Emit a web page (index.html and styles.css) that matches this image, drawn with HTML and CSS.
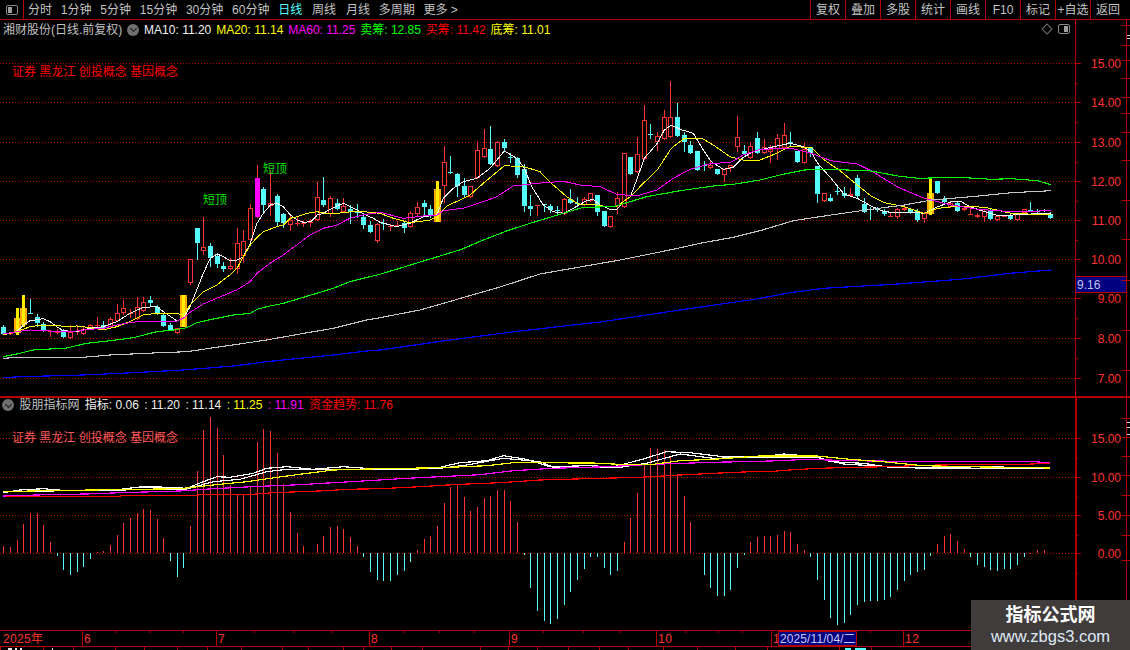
FILE: index.html
```html
<!DOCTYPE html>
<html lang="zh-CN">
<head>
<meta charset="utf-8">
<title>湘财股份 日线</title>
<link rel="stylesheet" href="styles.css">
</head>
<body>
<div class="app">
  <header class="toolbar">
    <button class="sidebar-toggle" aria-label="侧栏"><span class="toggle-icon toggle-left"></span></button>
    <nav class="periods">
      <span>分时</span><span>1分钟</span><span>5分钟</span><span>15分钟</span><span>30分钟</span><span>60分钟</span>
      <span class="active">日线</span><span class="wide">周线</span><span class="wide">月线</span><span>多周期</span><span>更多 &gt;</span>
    </nav>
    <div class="actions">
      <span>复权</span><span>叠加</span><span>多股</span><span>统计</span><span>画线</span><span>F10</span><span>标记</span><span>+自选</span><span>返回</span>
    </div>
  </header>

  <section class="panel price-panel">
    <svg id="price" class="chart" viewBox="0 20 1130 376" width="1130" height="376"></svg>
    <div class="legend price-legend">
      <span class="title">湘财股份(日线.前复权)</span>
      <span class="chevron"></span>
      <span class="white">MA10: 11.20</span>
      <span class="yellow">MA20: 11.14</span>
      <span class="magenta">MA60: 11.25</span>
      <span class="green">卖筹: 12.85</span>
      <span class="red">买筹: 11.42</span>
      <span class="yellow">底筹: 11.01</span>
    </div>
    <div class="tools">
      <span class="diamond"></span>
      <span class="toggle-icon toggle-right"></span>
    </div>
    <p class="concepts price-concepts">证券 黑龙江 创投概念 基因概念</p>
  </section>

  <section class="panel indicator-panel">
    <svg id="indicator" class="chart" viewBox="0 398 1130 232" width="1130" height="232"></svg>
    <div class="legend indicator-legend">
      <span class="chevron"></span>
      <span class="title">股朋指标网</span>
      <span class="white name">指标: 0.06</span>
      <span class="white">: 11.20</span>
      <span class="white">: 11.14</span>
      <span class="yellow">: 11.25</span>
      <span class="magenta">: 11.91</span>
      <span class="red">资金趋势: 11.76</span>
    </div>
    <p class="concepts indicator-concepts">证券 黑龙江 创投概念 基因概念</p>
  </section>

  <footer class="timeline">
    <svg id="time" class="chart" viewBox="0 630 1130 20" width="1130" height="20"></svg>
  </footer>

  <aside class="watermark">
    <strong>指标公式网</strong>
    <span>www.zbgs3.com</span>
  </aside>
</div>
<script src="chart.js"></script>
</body>
</html>
```

FILE: styles.css
```css
* { box-sizing: border-box; }
html, body { margin: 0; padding: 0; background: #000; overflow: hidden; }
body { width: 1130px; height: 650px; font: 12px/1 "Liberation Sans", "Noto Sans CJK SC", sans-serif; color: #c8c8c8; }
.app { position: relative; width: 1130px; height: 650px; display: flex; flex-direction: column; overflow: hidden; }

.toolbar { flex: 0 0 20px; display: flex; align-items: stretch; border-bottom: 1px solid #b40000; }
.sidebar-toggle { width: 24px; padding: 0; background: none; border: 0; border-right: 1px solid #b40000; display: flex; align-items: center; justify-content: center; }
.toggle-icon { display: block; width: 12px; height: 10px; border: 1px solid #8a8a8a; border-radius: 2px; position: relative; }
.toggle-icon::after { content: ""; position: absolute; top: 1px; bottom: 1px; width: 4px; background: #a0a0a0; }
.toggle-left::after { left: 1px; }
.toggle-right::after { right: 1px; }
.periods { display: flex; align-items: center; gap: 8.8px; padding-left: 4px; flex: 1; color: #c4c4c4; }
.periods .wide { margin-left: 1px; }
.periods .active { color: #55ffff; }
.actions { display: flex; padding-right: 5px; color: #c4c4c4; }
.actions span { width: 35px; border-left: 1px solid #b40000; display: flex; align-items: center; justify-content: center; }

.panel { position: relative; }
.price-panel { flex: 0 0 376px; }
.indicator-panel { flex: 0 0 234px; border-top: 2px solid #b40000; }
.chart { display: block; }

.legend { position: absolute; display: flex; align-items: center; white-space: nowrap; }
.price-legend { top: 3px; left: 3px; height: 13px; gap: 4.9px; }
.indicator-legend { top: 0; left: 2px; height: 14px; gap: 5.4px; }
.legend .title { color: #c0c0c0; }
.chevron { width: 12px; height: 12px; border-radius: 50%; background: #707070; position: relative; flex: none; }
.chevron::after { content: ""; position: absolute; left: 3.5px; top: 2.5px; width: 4px; height: 4px; border: solid #1c1c1c; border-width: 0 1.5px 1.5px 0; transform: rotate(45deg); }
.white { color: #f0f0f0; }
.yellow { color: #ffff00; }
.magenta { color: #ff00ff; }
.green { color: #00ff00; }
.red { color: #ff0000; }

.tools { position: absolute; top: 4px; left: 1043px; display: flex; align-items: center; gap: 7px; }
.diamond { display: block; width: 8px; height: 8px; border: 1px solid #707070; transform: rotate(45deg); }

.concepts { position: absolute; margin: 0; left: 12px; white-space: nowrap; }
.price-concepts { top: 46px; color: #ff0000; }
.indicator-concepts { top: 34px; color: #ff5a5a; }

.timeline { flex: 0 0 20px; }

.watermark { position: absolute; right: 0; bottom: 0; width: 159px; height: 50px; background: #403c3c; display: flex; flex-direction: column; align-items: center; justify-content: center; gap: 3px; color: #fff; }
.watermark strong { font-size: 18px; line-height: 20px; }
.watermark span { font-size: 16.5px; line-height: 17px; color: #dfe9f5; }
```

FILE: chart.js
```js
// Daily price chart data, traced in 3x coordinates per section, then drawn as SVG.
var NS = "http://www.w3.org/2000/svg";
var RED = "#ff3232", CYAN = "#54fcfc", LINE = "#b40000";

function el(svg, name, attrs, text) {
  var n = document.createElementNS(NS, name);
  for (var k in attrs) n.setAttribute(k, attrs[k]);
  if (text !== undefined) n.textContent = text;
  svg.appendChild(n);
  return n;
}
function hline(s, x1, x2, y, c, extra) {
  var a = { x1: x1, x2: x2, y1: y + .5, y2: y + .5, stroke: c, "shape-rendering": "crispEdges" };
  for (var k in extra) a[k] = extra[k];
  el(s, "line", a);
}
function vline(s, x, y1, y2, c, w) {
  el(s, "rect", { x: x, y: y1, width: w || 1, height: Math.max(y2 - y1, 1), fill: c, "shape-rendering": "crispEdges" });
}
function cx(i) { return Math.round(3.3 + 6.67 * i); }

// [bodyTop, bodyBottom, high, low, kind]  kind: c cyan, r red, o signal, m magenta
var A = [
[531,551,525,552,"c"],[548,552,548,552,"r"],[505,550,475,555,"o"],[475,525,435,530,"o"],[488,488,447,492,"c"],
[502,520,492,530,"c"],[523,540,515,545,"c"],[543,543,540,560,"r"],[543,548,538,552,"r"],[541,560,537,561,"c"],
[546,563,525,563,"r"],[543,543,525,555,"r"],[536,553,530,555,"r"],[526,537,522,540,"r"],[526,526,502,532,"r"],
[526,535,513,540,"c"],[508,530,502,532,"r"],[488,513,462,515,"r"],[475,488,450,495,"r"],[490,490,478,505,"r"],
[470,507,442,510,"r"],[455,482,442,485,"r"],[450,458,438,470,"c"],[470,491,465,495,"c"],[496,527,490,530,"c"],
[526,540,518,542,"c"],[533,550,533,550,"r"],[435,530,435,530,"o"],[328,400,328,405,"r"],[235,278,235,330,"c"],
[290,304,202,315,"r"],[289,323,280,350,"c"],[318,341,310,353,"c"],[348,357,335,365,"c"],[349,358,325,360,"r"],
[280,358,235,372,"r"],[272,318,240,340,"r"],[175,270,163,280,"r"],[84,200,45,200,"m"],[118,164,112,190,"c"],
[160,167,60,197,"r"],[138,215,132,232,"c"],[192,218,188,235,"c"],[210,224,195,243,"r"],[218,218,200,228,"r"],
[218,218,212,231,"r"],[216,216,208,231,"r"],[142,210,95,212,"r"],[150,165,82,170,"c"],[145,192,138,200,"r"],
[160,176,148,180,"c"],[168,185,145,190,"r"],[178,185,165,222,"c"],[183,190,162,205,"c"],[200,224,190,237,"c"],
[225,246,213,250,"c"],[222,272,218,278,"r"]];
var B = [
[430,430,418,450,"c"],[438,438,432,452,"r"],[435,435,422,440,"r"],[430,443,425,458,"c"],[400,440,392,442,"r"],
[381,402,365,410,"r"],[370,381,360,408,"c"],[387,408,375,415,"c"],[327,425,303,425,"o"],[247,317,198,370,"r"],
[275,275,228,282,"c"],[282,318,280,350,"c"],[318,345,295,352,"c"],[319,352,319,352,"r"],[211,293,183,295,"r"],
[203,230,148,232,"r"],[207,251,138,253,"c"],[187,257,183,262,"r"],[187,203,178,215,"c"],[231,231,218,250,"c"],
[235,284,230,295,"c"],[267,377,252,395,"c"],[378,386,345,407,"c"],[374,374,374,407,"r"],[373,373,372,395,"c"],
[379,391,372,399,"c"],[390,390,378,402,"c"],[358,402,355,404,"r"],[358,369,327,372,"c"],[370,370,350,380,"c"],
[358,375,352,378,"r"],[340,362,338,365,"r"],[345,396,345,408,"c"],[393,438,393,440,"c"],[409,440,409,440,"r"],
[355,378,335,403,"r"],[220,380,220,380,"r"],[232,282,232,284,"c"],[223,276,170,278,"r"],[121,238,75,240,"r"],
[162,162,133,178,"c"],[169,185,155,212,"r"],[112,176,90,178,"r"],[112,170,3,172,"r"],[112,167,68,170,"c"],
[166,185,155,215,"c"],[195,219,183,222,"c"],[213,270,213,272,"c"],[255,255,243,272,"c"],[255,263,240,265,"r"],
[267,281,267,283,"c"],[267,284,267,305,"r"],[254,265,254,275,"r"],[172,202,108,215,"r"],[212,222,195,225,"c"],
[197,235,185,238,"r"],[175,218,157,220,"c"]];
var C = [
[140,160,118,162,"r"],[148,155,135,188,"r"],[115,148,102,180,"r"],[105,145,70,147,"r"],[126,126,97,140,"c"],
[153,187,153,189,"c"],[148,190,128,190,"r"],[142,160,142,170,"c"],[198,282,198,310,"c"],[278,302,278,302,"r"],
[293,302,282,302,"c"],[272,272,260,285,"c"],[280,287,262,293,"c"],[282,288,265,292,"r"],[234,287,226,293,"c"],
[312,335,294,336,"c"],[326,326,320,360,"c"],[326,331,320,335,"c"],[333,343,328,348,"c"],[348,348,336,352,"r"],
[328,350,325,357,"r"],[323,330,318,332,"r"],[327,339,324,340,"c"],[332,360,328,365,"c"],[339,358,336,368,"r"],
[279,343,235,345,"o"],[244,279,244,281,"c"],[296,305,288,305,"c"],[308,320,308,320,"r"],[308,332,304,332,"c"],
[325,331,318,331,"r"],[342,342,322,344,"r"],[345,352,338,353,"r"],[332,352,328,365,"r"],[332,356,328,356,"c"],
[348,359,347,359,"r"],[347,347,345,349,"r"],[345,356,342,358,"c"],[342,361,342,361,"r"],[326,340,326,340,"r"],
[329,329,306,332,"c"],[334,334,328,341,"c"],[331,331,328,335,"c"],[343,353,335,353,"c"]];

function toCandles() {
  var out = [];
  [[A, 150], [B, 80], [C, 100]].forEach(function (g) {
    g[0].forEach(function (d) {
      out.push({ t: g[1] + d[0] / 3, b: g[1] + d[1] / 3, h: g[1] + d[2] / 3, l: g[1] + d[3] / 3, k: d[4] });
    });
  });
  return out;
}

// chain polylines traced in several sections: [[xOffset, yOffset, [zx,zy,...]], ...]
function chain(parts) {
  var pts = [], last = -1;
  parts.forEach(function (p) {
    for (var i = 0; i < p[2].length; i += 2) {
      var x = p[0] + p[2][i] / 3, y = p[1] + p[2][i + 1] / 3;
      if (x > last) { pts.push(x.toFixed(1) + "," + y.toFixed(1)); last = x; }
    }
  });
  return pts.join(" ");
}
function poly(s, parts, color, w) {
  el(s, "polyline", { points: chain(parts), fill: "none", stroke: color, "stroke-width": w || 1, "shape-rendering": "crispEdges" });
}

var PL = [
["#f4f4f4", 1,
[10,552,50,545,70,525,90,512,130,506,150,515,170,530,190,542,230,545,270,535,310,530,350,515,390,490,430,472,470,470,490,485,530,512,550,505,570,470,590,420,610,370,631,325,652,312,670,320,690,332,711,330,730,320,751,280,771,220,790,190,811,165,832,160,850,170,871,195,892,210,910,217,932,215,952,195,970,190,990,178,1030,160,1051,170,1072,180,1090,192,1120,205,1140,217],
[0,432,50,440,90,430,130,410,170,405,190,355,220,325,250,305,290,295,330,265,373,213,410,235,433,265,455,320,490,375,520,395,553,400,592,378,620,362,640,358,660,375,690,388,712,387,730,365,751,350,770,300,793,235,832,190,853,150,874,135,900,148,940,160,970,210,994,245,1030,268,1060,262,1090,232,1120,215,1140,210],
[0,150,50,138,90,130,130,140,153,155,173,190,213,235,253,283,292,295,333,318,373,335,414,338,474,338,493,340,534,320,574,305,600,303,634,322,674,335,714,347,760,345,813,342,873,340]],
["#ffff00", 1,
[10,555,50,545,90,530,130,525,170,525,190,530,230,528,270,533,310,540,350,530,390,515,430,495,470,490,530,490,550,495,570,465,610,425,650,405,690,375,711,355,730,320,751,285,771,262,790,245,830,230,850,225,871,205,892,200,920,190,950,185,990,192,1030,188,1072,183,1120,188,1140,190],
[0,400,40,415,90,428,150,420,172,410,200,378,240,360,270,345,310,310,340,285,373,257,433,260,480,275,520,315,560,350,600,375,640,373,680,380,712,378,751,350,790,310,832,270,874,205,913,175,970,177,1000,195,1050,230,1090,240,1140,240],
[0,178,50,160,90,140,153,142,193,180,240,212,292,255,333,288,373,308,433,320,493,340,534,325,600,318,674,322,754,340,873,345]],
["#ff00ff", 1,
[10,552,50,545,90,540,130,541,170,545,230,543,270,538,310,535,350,525,390,518,430,513,470,513,530,513,550,505,570,487,610,462,650,445,710,420,750,395,771,370,810,340,850,315,890,285,930,255,970,235,1010,225,1050,205,1090,195,1140,187],
[0,405,70,415,130,408,172,405,190,392,250,385,310,365,350,350,400,318,470,310,550,304,600,315,660,320,710,343,770,348,830,330,880,295,930,268,994,250,1050,248,1090,225,1140,208],
[0,145,93,145,153,160,213,182,292,192,333,212,414,262,493,295,574,315,654,328,754,335,873,332]],
["#00f800", 1.1,
[10,620,50,612,100,600,200,594,260,580,330,572,400,563,470,545,520,540,560,533,590,518,640,507,700,495,751,490,771,478,800,470,850,460,900,445,950,430,1000,415,1050,395,1090,385,1140,373],
[245,508,310,480,380,453,450,430,550,400,610,382,700,380,800,350,900,332,1000,318,1060,313,1140,300],
[0,242,60,225,133,210,213,208,333,213,414,228,474,235,594,232,694,238,754,236,833,242,873,254]],
["#c4c4c4", 1.1,
[10,625,60,622,250,622,330,615,480,608,560,605,650,592,800,570,900,552,1000,535,1100,510,1140,503],
[120,690,360,621,480,582,600,561,720,540,880,508,960,490,1060,472,1140,452],
[0,390,100,362,213,345,333,328,433,315,514,300,634,290,754,278,873,272]],
["#0000ff", 1.2,
[10,683,60,680,140,678,250,675,400,668,550,660,700,648,800,635,900,625,1000,615,1100,603,1140,600],
[210,780,420,753,660,726,900,690,1130,657],
[0,595,90,578,190,565,400,553,600,538,750,520,873,510]]
];

// ---------- price panel ----------
(function () {
  var s = document.getElementById("price");
  var labels = { 15: 63, 14: 102, 13: 142, 12: 181, 11: 220, 10: 259, 9: 298, 8: 338, 7: 378 };
  Object.keys(labels).forEach(function (p) {
    var y = labels[p];
    hline(s, 0, 1075, y, LINE, { "stroke-dasharray": "1 2" });
    hline(s, 1075, 1081, y, LINE);
    hline(s, 1075, 1078, y + 20, LINE);
    el(s, "text", { x: 1121, y: y + 4.5, "text-anchor": "end", fill: RED, "font-size": 12 }, p + ".00");
  });

  toCandles().forEach(function (c, i) {
    var x = cx(i);
    var top = Math.round(c.t), bot = Math.round(c.b), hi = Math.round(c.h), lo = Math.round(c.l);
    if (c.k === "o") {
      vline(s, x - 3, top, bot, "#ffa800", 7);
      vline(s, x - 1, hi, lo, "#ffee00", 3);
      return;
    }
    var color = c.k === "c" ? CYAN : RED;
    vline(s, x, hi, top, color);
    vline(s, x, bot, lo, color);
    if (c.k === "m") { vline(s, x - 2, top, bot, "#ff00ff", 5); return; }
    if (bot - top < 2) { vline(s, x - 2, top, top + 1, color, 5); vline(s, x, hi, lo, color); return; }
    if (c.k === "c") vline(s, x - 2, top, bot, color, 5);
    else el(s, "rect", { x: x - 1.5, y: top + .5, width: 4, height: bot - top - 1, fill: "#000", stroke: color, "shape-rendering": "crispEdges" });
  });

  PL.forEach(function (l) {
    poly(s, [[0, 150, l[2]], [380, 80, l[3]], [760, 100, l[4]]], l[0], l[1]);
  });

  [[203, 204], [263, 173]].forEach(function (p) {
    el(s, "text", { x: p[0], y: p[1], fill: "#00e000", "font-size": 12 }, "短顶");
  });

  vline(s, 1075, 20, 396, LINE);
  vline(s, 1126, 20, 396, LINE);
  el(s, "rect", { x: 1075.5, y: 276.5, width: 51, height: 16, fill: "#000080", stroke: LINE, "shape-rendering": "crispEdges" });
  el(s, "text", { x: 1077, y: 289, fill: "#c4c4f0", "font-size": 12 }, "9.16");
  [25, 45, 60, 78, 97, 113, 132, 160, 200, 239, 280, 330, 370].forEach(function (y) { hline(s, 1122, 1130, y, LINE); });
  [35, 38].forEach(function (y) { hline(s, 1127, 1130, y, "#d8d8d8"); });
})();

// ---------- indicator panel ----------
(function () {
  var s = document.getElementById("indicator");
  [[15, 438], [10, 477], [5, 515], [0, 553]].forEach(function (p) {
    hline(s, 0, 1075, p[1], LINE, { "stroke-dasharray": "1 2" });
    hline(s, 1075, 1081, p[1], LINE);
    hline(s, 1075, 1078, p[1] + 20, LINE);
    el(s, "text", { x: 1121, y: p[1] + 4.5, "text-anchor": "end", fill: RED, "font-size": 12 }, p[0].toFixed(2));
  });

  var bars = [20,17,40,88,120,120,85,34,-8,-50,-65,-58,-43,-17,4,7,25,55,90,106,120,132,130,103,45,-23,-73,-44,82,247,370,408,376,295,205,175,175,200,333,372,367,300,207,124,60,20,0,28,52,78,82,73,48,22,-13,-58,-80,
  -85,-83,-67,-55,-26,10,43,50,82,150,198,203,168,127,137,165,172,190,190,157,93,-5,-106,-175,-205,-214,-199,-157,-118,-82,-49,-13,-13,-46,-67,-55,32,105,181,265,316,313,310,290,238,170,92,0,-67,-106,-130,-130,-110,-46,-5,32,47,
  52,50,55,65,62,28,8,-13,-80,-142,-195,-217,-210,-185,-155,-148,-145,-143,-140,-133,-110,-83,-65,-58,-50,-10,28,50,56,37,13,-13,-35,-43,-50,-53,-47,-47,-35,-13,1,10,10];
  bars.forEach(function (v, i) {
    if (!v) return;
    var h = Math.abs(v) / 3, x = cx(i);
    if (v > 0) vline(s, x, Math.round(553 - h), 553, RED);
    else vline(s, x, 553, Math.round(553 + h), CYAN);
  });

  var lines = [
    ["#ffffff",
     [10,305,200,302,360,300,560,297,640,275,720,268,800,245,860,238,1140,238],
     [0,122,180,115,260,105,370,85,480,95,520,112,720,112,800,100,900,72,1000,85,1140,82],
     [0,82,200,82,280,102,380,108,520,115,900,116]],
    ["#ffffff",
     [10,308,60,300,130,296,200,302,360,298,420,291,480,291,560,295,610,275,650,260,690,262,760,250,800,235,860,230,940,238,1030,230,1140,238],
     [0,120,100,118,180,112,240,98,320,92,370,77,440,88,510,110,620,107,700,110,780,90,860,65,930,68,1030,80,1140,82],
     [0,75,100,72,200,80,240,95,340,100,420,112,520,113,700,110,900,114]],
    ["#ff0000",
     [10,319,360,319,361,316,590,316,600,314,740,314,820,308,900,305,980,302,1040,298,1140,296],
     [0,176,120,170,240,163,360,158,480,150,620,146,780,142,900,135,1040,128,1140,124],
     [0,128,70,124,130,119,210,115,310,112,420,110,520,106,630,104,830,103,900,99]],
    ["#ff00ff",
     [10,318,140,314,260,312,360,308,540,303,640,296,780,289,900,284,1000,278,1140,270],
     [0,152,80,145,180,140,300,134,400,122,520,115,680,110,820,103,1000,97,1140,94],
     [0,97,90,92,170,88,300,92,450,94,830,94,900,98]],
    ["#ffff00",
     [10,305,130,302,340,299,540,296,640,285,740,275,860,258,1000,240,1140,236],
     [0,116,180,113,320,107,400,98,640,99,740,104,820,103,900,92,1000,88,1140,78],
     [0,78,200,78,300,88,400,95,520,107,650,110,900,114]]
  ];
  lines.forEach(function (l) {
    poly(s, [[0, 390, l[1]], [380, 430, l[2]], [750, 430, l[3]]], l[0], 1.2);
  });

  vline(s, 1075, 398, 630, LINE, 2);
  vline(s, 1126, 398, 630, LINE);
  [418, 437, 456, 475, 495, 515, 535, 560].forEach(function (y) { hline(s, 1122, 1130, y, LINE); });
  [422, 427, 434].forEach(function (y) { hline(s, 1127, 1130, y, "#d8d8d8"); });
})();

// ---------- time axis ----------
(function () {
  var s = document.getElementById("time");
  hline(s, 0, 1130, 630, LINE);
  hline(s, 0, 1130, 646, LINE);
  [116, 149, 183, 254, 293, 331, 404, 439, 474, 543, 583, 619, 685, 718, 742, 870].forEach(function (x) {
    vline(s, x, 631, 633, LINE);
  });
  [[82, "6"], [216, "7"], [369, "8"], [509, "9"], [656, "10"], [771, "1"], [903, "12"]].forEach(function (m) {
    vline(s, m[0], 631, 646, LINE);
    el(s, "text", { x: m[0] + 2, y: 643, fill: RED, "font-size": 12, "letter-spacing": ".5" }, m[1]);
  });
  el(s, "text", { x: 3, y: 643, fill: RED, "font-size": 12, "letter-spacing": ".3" }, "2025年");
  el(s, "rect", { x: 778.5, y: 631.5, width: 78, height: 14, fill: "#000080", stroke: LINE, "shape-rendering": "crispEdges" });
  el(s, "text", { x: 780, y: 643, fill: "#c8c8f4", "font-size": 12, "letter-spacing": ".1" }, "2025/11/04/二");

  // ticks and clipped marks of the row below the axis
  [0, 43, 73, 115, 144, 177, 207, 241, 282, 308, 343, 363, 391, 422, 480, 508, 537, 568, 599, 628, 663, 697, 735, 767, 839, 871].forEach(function (x) {
    vline(s, x, 647, 650, LINE);
  });
  [[8, 4], [15, 2], [20, 2], [52, 1]].forEach(function (m) { vline(s, m[0], 648, 650, "#e8e8e8", m[1]); });
  [[845, 6], [855, 11]].forEach(function (m) { vline(s, m[0], 648, 650, CYAN, m[1]); });
})();
```
